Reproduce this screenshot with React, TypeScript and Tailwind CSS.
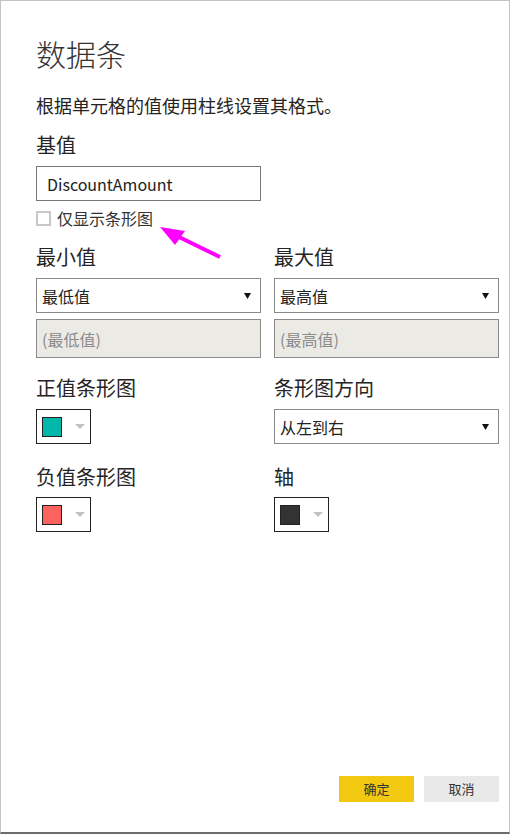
import React from "react";

const font = { fontFamily: '"Noto Sans CJK SC", "Noto Sans", sans-serif' };

function Select({ value }: { value: string }) {
  return (
    <div className="flex h-[35px] w-full items-center justify-between border border-[#8a8a8a] bg-white pl-[5px] pr-[9px]">
      <span className="text-[16px] leading-[20px] text-[#222]">{value}</span>
      <svg width="7" height="6" viewBox="0 0 7 6">
        <path d="M0 0 H7 L3.5 6 Z" fill="#111" />
      </svg>
    </div>
  );
}

function ColorPicker({ color }: { color: string }) {
  return (
    <div className="flex h-[35px] w-[55px] items-center border border-[#222] bg-white pl-[5px]">
      <div className="h-[20px] w-[20px] border border-[#222]" style={{ backgroundColor: color }} />
      <svg className="ml-[13px]" width="10" height="6" viewBox="0 0 10 6">
        <path d="M0 0 H10 L5 5 Z" fill="#c2c2c2" />
      </svg>
    </div>
  );
}

function Label({ children }: { children: React.ReactNode }) {
  return <div className="text-[20px] leading-[28px] text-[#252423]">{children}</div>;
}

function Disabled({ value }: { value: string }) {
  return (
    <div className="mt-[6px] flex h-[39px] items-center border border-[#8a8a8a] bg-[#ebeae4] pl-[5px] text-[16px] text-[#8c8c8c]">
      {value}
    </div>
  );
}

export default function App() {
  return (
    <div
      className="relative flex h-[834px] w-[510px] flex-col border-l border-t border-r border-b-2 border-l-[#c4c4c4] border-t-[#c4c4c4] border-r-[#c4c4c4] border-b-[#6b6b6b] bg-white pl-[35px] pr-[10px]"
      style={font}
    >
      <h1 className="mt-[32px] text-[30px] font-light leading-[40px] text-[#333]">数据条</h1>
      <p className="mt-[20px] text-[18px] leading-[24px] text-[#252423]">根据单元格的值使用柱线设置其格式。</p>

      <div className="mt-[14px]">
        <Label>基值</Label>
      </div>
      <div className="mt-[7px] flex h-[35px] w-[225px] items-center border border-[#777] px-[10px] text-[16px] text-[#222]">
        DiscountAmount
      </div>
      <label className="mt-[7px] flex h-[20px] items-center gap-[6px]">
        <span className="h-[15px] w-[15px] border-2 border-[#c8c8c8] bg-white" />
        <span className="text-[16px] leading-[20px] text-[#333]">仅显示条形图</span>
      </label>

      <div className="mt-[15px] grid grid-cols-2 gap-x-[13px]">
        <div className="flex flex-col">
          <Label>最小值</Label>
          <div className="mt-[7px]">
            <Select value="最低值" />
          </div>
          <Disabled value="(最低值)" />
        </div>
        <div className="flex flex-col">
          <Label>最大值</Label>
          <div className="mt-[7px]">
            <Select value="最高值" />
          </div>
          <Disabled value="(最高值)" />
        </div>

        <div className="mt-[16px] flex flex-col">
          <Label>正值条形图</Label>
          <div className="mt-[7px]">
            <ColorPicker color="#01b8aa" />
          </div>
        </div>
        <div className="mt-[16px] flex flex-col">
          <Label>条形图方向</Label>
          <div className="mt-[7px]">
            <Select value="从左到右" />
          </div>
        </div>

        <div className="mt-[19px] flex flex-col">
          <Label>负值条形图</Label>
          <div className="mt-[6px]">
            <ColorPicker color="#fd625e" />
          </div>
        </div>
        <div className="mt-[19px] flex flex-col">
          <Label>轴</Label>
          <div className="mt-[6px]">
            <ColorPicker color="#333333" />
          </div>
        </div>
      </div>

      <div className="mt-auto mb-[30px] flex justify-end gap-[10px]">
        <button className="h-[26px] w-[75px] bg-[#f2c811] text-[13px] text-[#333]">确定</button>
        <button className="h-[26px] w-[75px] bg-[#e9e9e9] text-[13px] text-[#333]">取消</button>
      </div>

      <svg className="pointer-events-none absolute left-[150px] top-[218px]" width="80" height="46" viewBox="0 0 80 46">
        <line x1="26" y1="17" x2="69" y2="38" stroke="#ff00ff" strokeWidth="4" />
        <polygon points="9,8 34,12 24,26" fill="#ff00ff" />
      </svg>
    </div>
  );
}
